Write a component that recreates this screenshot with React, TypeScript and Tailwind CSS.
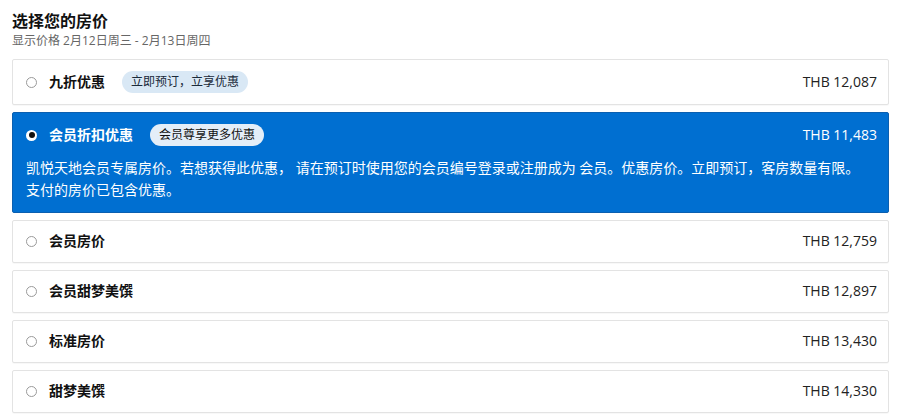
import { useState } from "react"

const rates = [
  { id: "r1", name: "九折优惠", badge: "立即预订，立享优惠", price: "THB 12,087" },
  {
    id: "r2",
    name: "会员折扣优惠",
    badge: "会员尊享更多优惠",
    price: "THB 11,483",
    desc: ["凯悦天地会员专属房价。若想获得此优惠， 请在预订时使用您的会员编号登录或注册成为 会员。优惠房价。立即预订，客房数量有限。", "支付的房价已包含优惠。"],
  },
  { id: "r3", name: "会员房价", price: "THB 12,759" },
  { id: "r4", name: "会员甜梦美馔", price: "THB 12,897" },
  { id: "r5", name: "标准房价", price: "THB 13,430" },
  { id: "r6", name: "甜梦美馔", price: "THB 14,330" },
]

export default function App() {
  const [selected, setSelected] = useState("r2")

  return (
    <div
      className="min-h-[420px] bg-white px-3 pt-[10px] text-[#222]"
      style={{ fontFamily: '"Open Sans", "Noto Sans CJK SC", sans-serif' }}
    >
      <h1 className="text-[16px] font-bold leading-[22px] text-[#111]">选择您的房价</h1>
      <p className="mt-[1px] text-[12px] leading-[16px] text-[#666]">显示价格 2月12日周三 - 2月13日周四</p>

      <div className="mt-[10px] flex w-[877px] flex-col gap-[7px]">
        {rates.map((r) => {
          const active = r.id === selected
          return (
            <button
              key={r.id}
              type="button"
              onClick={() => setSelected(r.id)}
              className={
                (r.badge ? "py-[11px] " : "pt-[9px] pb-[10px] ") +
                (active
                  ? "flex flex-col rounded-[2px] border border-[#0a5fb0] bg-[#006fd1] pl-[13px] pr-[11px] text-left text-white"
                  : "flex flex-col rounded-[2px] border border-[#e3e3e3] bg-white pl-[13px] pr-[11px] text-left shadow-[0_1px_1px_rgba(0,0,0,0.03)]")
              }
            >
              <div className="flex min-h-[22px] w-full items-center">
                {active ? (
                  <span className="flex h-[11px] w-[11px] shrink-0 items-center justify-center rounded-full bg-white">
                    <span className="h-[6px] w-[6px] rounded-full bg-[#111]" />
                  </span>
                ) : (
                  <span className="h-[11px] w-[11px] shrink-0 rounded-full border border-[#9a9a9a] bg-white" />
                )}
                <span
                  className={
                    "ml-[12px] text-[14px] font-bold leading-[20px] " + (active ? "text-white" : "text-[#111]")
                  }
                >
                  {r.name}
                </span>
                {r.badge && (
                  <span
                    className={
                      "ml-[17px] rounded-full px-[9px] text-[12px] leading-[22px] " +
                      (active ? "bg-[#e4eef8] text-[#111]" : "bg-[#d9e8f5] text-[#1a2a3a]")
                    }
                  >
                    {r.badge}
                  </span>
                )}
                <span
                  className={"ml-auto text-[14px] leading-[20px] " + (active ? "text-white" : "text-[#222]")}
                >
                  {r.price}
                </span>
              </div>
              {active && r.desc && (
                <p className="mt-[11px] text-[14px] leading-[22px] text-white">
                  {r.desc[0]}
                  <br />
                  {r.desc[1]}
                </p>
              )}
            </button>
          )
        })}
      </div>
    </div>
  )
}
